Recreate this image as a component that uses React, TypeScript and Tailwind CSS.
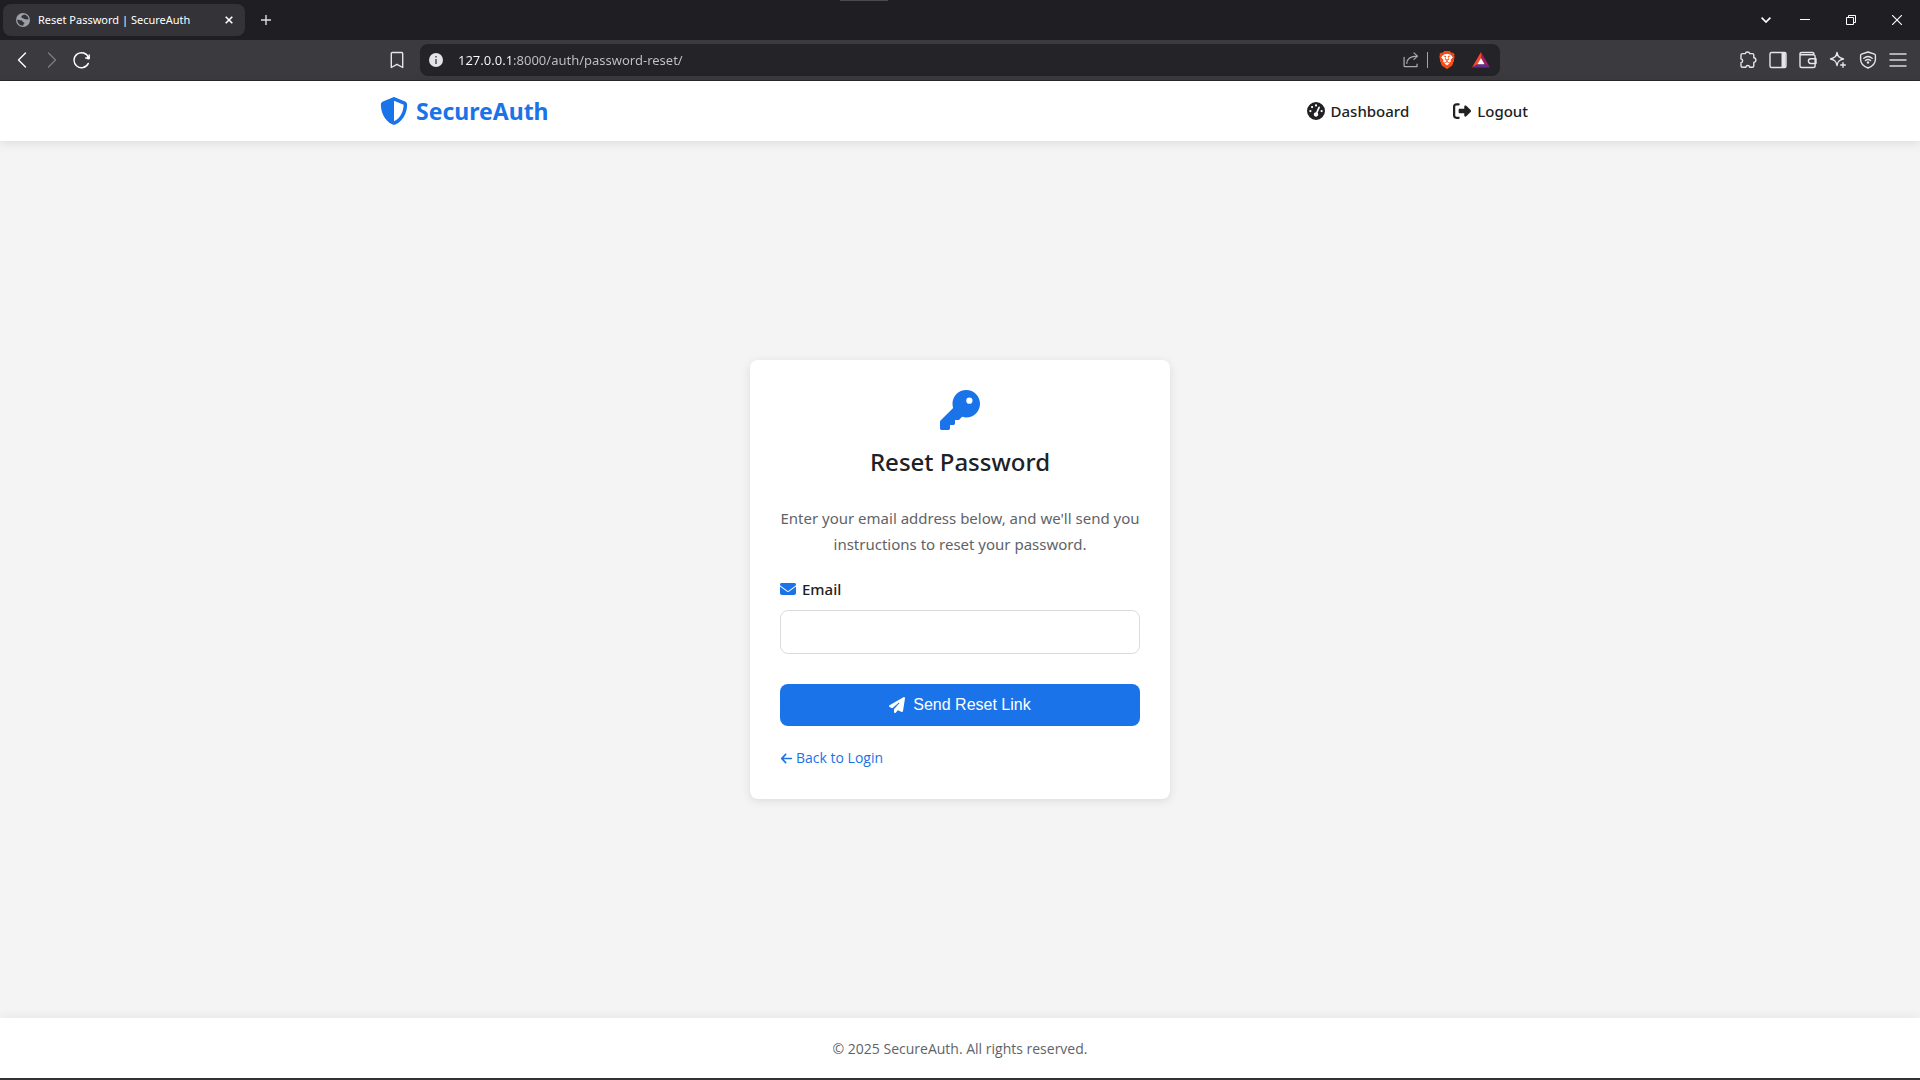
import {
  FaArrowLeft,
  FaEnvelope,
  FaGaugeHigh,
  FaKey,
  FaPaperPlane,
  FaRightFromBracket,
  FaShieldHalved,
} from "react-icons/fa6";
import { SiBrave } from "react-icons/si";
import type { ReactNode } from "react";

function Stroke({ children, className = "size-[18px]" }: { children: ReactNode; className?: string }) {
  return (
    <svg
      viewBox="0 0 18 18"
      className={className}
      fill="none"
      stroke="currentColor"
      strokeWidth="1.4"
      strokeLinecap="round"
      strokeLinejoin="round"
      aria-hidden="true"
    >
      {children}
    </svg>
  );
}

function IconButton({ label, children, className = "text-[#e6e6e8]" }: { label: string; children: ReactNode; className?: string }) {
  return (
    <button type="button" aria-label={label} className={`flex w-[30px] items-center justify-center ${className}`}>
      {children}
    </button>
  );
}

function TabStrip() {
  return (
    <div className="relative flex h-10 items-center bg-[#1f1e23] text-white">
      <div className="absolute left-[840px] top-0 h-px w-12 bg-[#4b4b4b]" />
      <div className="ml-[3px] flex h-8 w-[242px] items-center rounded-lg bg-[#343338] pl-[13px] pr-2">
        <svg viewBox="0 0 14 14" className="size-[14px]" aria-hidden="true">
          <circle cx="7" cy="7" r="7" fill="#9aa0a6" />
          <path d="M1.3 6.500 4 7.200c1.400.2 2.300.2 2.600 1 .2.700.2 1.200 1.300 1.200.8.100.6 1.300-.2 1.700l-.6 1.600C3.800 12.800 1.200 10 1.300 6.500zM8.500 1.400c-1.200.2-2.600.9-3 1.800-.3.800-.1 1.500.9 1.800 1.200.300 1.300.9 2.300 1.100 1.200.200 1.800.9 3.800.2C12.600 4 10.800 1.900 8.500 1.400z" fill="#343338" />
        </svg>
        <span className="ml-2 grow whitespace-nowrap text-[11px]">Reset Password | SecureAuth</span>
        <button type="button" aria-label="Close tab" className="flex size-4 items-center justify-center">
          <svg viewBox="0 0 8 8" className="size-2" stroke="currentColor" strokeWidth="1.6" aria-hidden="true">
            <path d="M.7.7l6.600 6.600M7.300.7.700 7.300" />
          </svg>
        </button>
      </div>
      <button type="button" aria-label="New tab" className="ml-[11px] flex size-5 items-center justify-center text-[#dedee0]">
        <svg viewBox="0 0 10 10" className="size-[10px]" stroke="currentColor" strokeWidth="1.4" aria-hidden="true">
          <path d="M5 0v10M0 5h10" />
        </svg>
      </button>
      <div className="ml-auto flex h-full items-center">
        <button type="button" aria-label="Search tabs" className="flex h-full w-8 items-center justify-center">
          <svg viewBox="0 0 10 6" className="h-[6px] w-[10px]" fill="none" stroke="currentColor" strokeWidth="1.7" aria-hidden="true">
            <path d="M.6.600 5 5 9.400.6" />
          </svg>
        </button>
        <button type="button" aria-label="Minimize" className="flex h-full w-[46px] items-center justify-center">
          <svg viewBox="0 0 10 10" className="size-[10px]" stroke="currentColor" aria-hidden="true">
            <path d="M0 4.500h10" />
          </svg>
        </button>
        <button type="button" aria-label="Restore" className="flex h-full w-[46px] items-center justify-center">
          <svg viewBox="0 0 10 10" className="size-[10px]" fill="none" stroke="currentColor" aria-hidden="true">
            <path d="M.5 2.500h7v7h-7zM2.500 2.500v-2h7v7h-2" />
          </svg>
        </button>
        <button type="button" aria-label="Close window" className="flex h-full w-[46px] items-center justify-center">
          <svg viewBox="0 0 10 10" className="size-[10px]" stroke="currentColor" strokeWidth="1.100" aria-hidden="true">
            <path d="M0 0l10 10M10 0 0 10" />
          </svg>
        </button>
      </div>
    </div>
  );
}

function BraveIcon() {
  return (
    <span className="flex size-[18px] items-center justify-center bg-[radial-gradient(circle,#fff_6px,transparent_7px)]">
      <SiBrave className="size-[18px] text-[#fb4b12]" aria-hidden="true" />
    </span>
  );
}

function RewardsIcon() {
  return (
    <svg viewBox="0 0 18 16" className="h-4 w-[18px]" aria-hidden="true">
      <path d="M9 0 0 15.500 5.700 12.300 9 6z" fill="#ff4724" />
      <path d="M9 0l9 15.500-5.700-3.200L9 6z" fill="#9e1f63" />
      <path d="M0 15.500h18l-5.700-3.200H5.700z" fill="#662d91" />
      <path d="M9 6l3.600 6.300H5.400z" fill="#fff" />
    </svg>
  );
}

function Toolbar() {
  return (
    <div className="flex h-[41px] items-center border-b border-[#29282c] bg-[#3b3a3f] px-[7px]">
      <div className="flex flex-1 items-center">
        <IconButton label="Back" className="text-white">
          <Stroke><path d="M12.500 2 5.500 9l7 7" /></Stroke>
        </IconButton>
        <IconButton label="Forward" className="text-[#7c7b80]">
          <Stroke><path d="M5.500 2l7 7-7 7" /></Stroke>
        </IconButton>
        <IconButton label="Reload" className="text-white">
          <Stroke>
            <path d="M15.300 12.400A7.500 7.500 0 1 1 15.500 6.500" />
            <circle cx="15.400" cy="7" r="1.500" fill="currentColor" stroke="none" />
            <path d="M12.700 7h3.500V4" />
          </Stroke>
        </IconButton>
        <span className="ml-auto flex">
          <IconButton label="Bookmark this page">
            <Stroke><path d="M4.300 1.500h9.400a1 1 0 0 1 1 1v14L9 13.300l-5.700 3.200v-14a1 1 0 0 1 1-1z" /></Stroke>
          </IconButton>
        </span>
      </div>
      <div className="mx-2 flex h-8 w-[1080px] items-center rounded-lg bg-[#242328] pl-[9px] pr-[10px]">
        <svg viewBox="0 0 14 14" className="size-[14px]" aria-hidden="true">
          <circle cx="7" cy="7" r="7" fill="#e4e4e6" />
          <path d="M6.200 3.100h1.600v1.500H6.200zM6.200 5.900h1.600v5H6.200z" fill="#58575c" />
        </svg>
        <input
          type="text"
          aria-label="Address"
          defaultValue="127.0.0.1:8000/auth/password-reset/"
          className="ml-[15px] min-w-0 grow bg-[linear-gradient(90deg,#ffffff_55px,#c4c4c7_55px)] bg-clip-text pt-px text-[13px] text-transparent caret-white outline-none"
        />
        <button type="button" aria-label="Share" className="text-[#aaa9ad]">
          <Stroke className="size-4">
            <path d="M1.200 6v9.500a1 1 0 0 0 1 1h13.600v-3" />
            <path d="M4.200 12.800c.2-5 4.300-8 12-8.200M12.300 1l4 3.600-4 3.700" />
          </Stroke>
        </button>
        <span className="ml-2 h-4 w-px bg-[#a5a4a8]" />
        <button type="button" aria-label="Shields" className="ml-[10px]"><BraveIcon /></button>
        <button type="button" aria-label="Rewards" className="ml-4"><RewardsIcon /></button>
      </div>
      <div className="flex flex-1 items-center justify-end">
        <IconButton label="Extensions">
          <Stroke><path d="M3.500 2.600h2.800c.4-2.200 4-2.200 4.400 0h2.600c.9 0 1.500.6 1.500 1.500v2.600c2.800.4 2.800 4.300 0 4.700v3.300c0 .9-.6 1.500-1.500 1.500h-2.700c-.2-2.200-3.400-2.200-3.700 0H3.500c-.9 0-1.500-.6-1.500-1.500v-2.900c2.200-.3 2.200-3.600 0-3.900V4.100c0-.9.600-1.500 1.500-1.500z" /></Stroke>
        </IconButton>
        <IconButton label="Side panel">
          <Stroke><rect x="1" y="1.500" width="16" height="15" rx="1.500" /><path d="M12.500 2H16.500v14H12.500z" fill="currentColor" stroke="none" /></Stroke>
        </IconButton>
        <IconButton label="Wallet">
          <Stroke><path d="M14.800 3.800V2.700c0-.7-.5-1.200-1.200-1.200H2.500C1.600 1.500 1 2.100 1 2.800v11.900c0 1 .8 1.800 1.800 1.800h11.500c1 0 1.800-.8 1.800-1.800V5.500c0-1-.8-1.700-1.800-1.700H2.500c-.9 0-1.500-.5-1.500-1M17 7.700h-5.200a2.400 2.400 0 0 0 0 4.800H17z" /></Stroke>
        </IconButton>
        <IconButton label="Assistant">
          <Stroke><path d="M8 1.500c.8 4 2 5.400 6.500 6.500C10 9 8.800 10.500 8 14.500 7.200 10.500 6 9 1.500 8 6 6.900 7.200 5.500 8 1.500zM14 11.700v4.600M11.700 14h4.600" /></Stroke>
        </IconButton>
        <IconButton label="VPN">
          <Stroke><path d="M9 1l6.500 2.200c.6.200.9.600.9 1.200v4c0 4-3.500 7-7.400 8.600C5.100 15.400 1.600 12.400 1.600 8.400v-4c0-.6.300-1 .9-1.200zM4.800 7.200c2.500-2 5.900-2 8.400 0M6.400 9.500c1.600-1.200 3.600-1.200 5.200 0" /><circle cx="9" cy="11.500" r="1.200" fill="currentColor" stroke="none" /></Stroke>
        </IconButton>
        <IconButton label="Menu" className="text-[#d9d9db]">
          <Stroke><path d="M1 3h16M1 9h16M1 15h16" /></Stroke>
        </IconButton>
      </div>
    </div>
  );
}

function SiteHeader() {
  return (
    <header className="z-10 bg-white shadow-[0_2px_10px_rgba(0,0,0,0.1)]">
      <div className="mx-auto flex h-[60px] max-w-[1200px] items-center justify-between px-5">
        <a href="#home" className="flex items-center gap-2 text-[23px] font-bold text-[#1a73e8]">
          <FaShieldHalved className="size-7" aria-hidden="true" />
          SecureAuth
        </a>
        <nav className="flex gap-5 text-[15px] font-medium text-[#202124]">
          <a href="#dashboard" className="flex items-center gap-[6px] px-3">
            <FaGaugeHigh className="size-[18px]" aria-hidden="true" />
            Dashboard
          </a>
          <a href="#logout" className="flex items-center gap-[6px] px-3">
            <FaRightFromBracket className="size-[18px]" aria-hidden="true" />
            Logout
          </a>
        </nav>
      </div>
    </header>
  );
}

function ResetCard() {
  return (
    <section className="w-full max-w-[420px] rounded-lg bg-white p-[30px] shadow-[0_2px_10px_rgba(0,0,0,0.1)]">
      <FaKey className="mx-auto size-10 text-[#1a73e8]" aria-hidden="true" />
      <h1 className="mt-[14px] text-center text-2xl leading-9 font-medium text-[#202124]">Reset Password</h1>
      <p className="mt-[25px] text-center text-[15px] leading-[26px] text-[#5f6368]">
        Enter your email address below, and we'll send you instructions to reset your password.
      </p>
      <form className="mt-[19px]" onSubmit={(event) => event.preventDefault()}>
        <label htmlFor="email" className="flex items-center gap-[6px] text-[15px] leading-[26px] font-medium text-[#202124]">
          <FaEnvelope className="size-4 text-[#1a73e8]" aria-hidden="true" />
          Email
        </label>
        <input
          id="email"
          type="email"
          className="mt-2 block h-11 w-full rounded-lg border border-[#dadce0] px-3 text-base outline-none"
        />
        <button
          type="submit"
          className="mt-[30px] flex h-[42px] w-full items-center justify-center gap-2 rounded-lg bg-[#1a73e8] font-['Liberation_Sans',Arial,sans-serif] text-base text-white"
        >
          <FaPaperPlane className="size-4" aria-hidden="true" />
          Send Reset Link
        </button>
      </form>
      <a href="#login" className="mt-[21px] flex w-fit items-center gap-[3px] font-['Open_Sans',sans-serif] text-sm leading-[22px] text-[#1a73e8]">
        <FaArrowLeft className="size-[13px]" aria-hidden="true" />
        Back to Login
      </a>
    </section>
  );
}

export default function App() {
  return (
    <div className="flex min-h-screen flex-col border-b-2 border-[#333336] bg-[#f4f4f4] font-['Noto_Sans','Open_Sans',sans-serif]">
      <TabStrip />
      <Toolbar />
      <SiteHeader />
      <main className="flex grow items-center justify-center px-5 py-10">
        <ResetCard />
      </main>
      <footer className="bg-white pt-5 pb-[18px] text-center font-['Open_Sans',sans-serif] text-sm leading-[22px] text-[#5f6368] shadow-[0_-2px_10px_rgba(0,0,0,0.05)]">
        © 2025 SecureAuth. All rights reserved.
      </footer>
    </div>
  );
}
